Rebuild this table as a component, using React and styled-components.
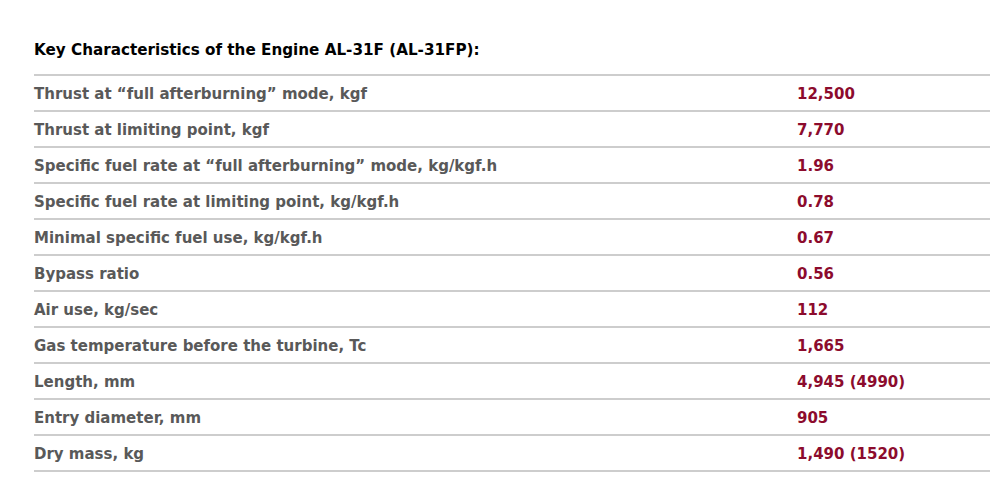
import styled, { createGlobalStyle } from 'styled-components';

const GlobalStyle = createGlobalStyle`
  body {
    margin: 0;
    background: #fff;
    font-family: "DejaVu Sans", Verdana, sans-serif;
  }
`;

const Wrap = styled.div`
  padding: 40px 10px 0 34px;
`;

const Title = styled.h3`
  margin: 0 0 13px;
  font-size: 15.2px;
  font-weight: bold;
  color: #000;
  line-height: 21px;
`;

const Table = styled.div`
  width: 956px;
  border-top: 2px solid #cdcdcd;
`;

const Row = styled.div`
  display: grid;
  grid-template-columns: 763px 1fr;
  height: 34px;
  padding-top: 1px;
  box-sizing: border-box;
  align-items: center;
  border-bottom: 2px solid #cdcdcd;
  font-size: 15px;
  font-weight: bold;
  height: 36px;
`;

const Label = styled.div`
  color: #595959;
`;

const Value = styled.div`
  color: #8c0b2d;
`;

const rows = [
  ['Thrust at \u201cfull afterburning\u201d mode, kgf', '12,500'],
  ['Thrust at limiting point, kgf', '7,770'],
  ['Specific fuel rate at \u201cfull afterburning\u201d mode, kg/kgf.h', '1.96'],
  ['Specific fuel rate at limiting point, kg/kgf.h', '0.78'],
  ['Minimal specific fuel use, kg/kgf.h', '0.67'],
  ['Bypass ratio', '0.56'],
  ['Air use, kg/sec', '112'],
  ['Gas temperature before the turbine, Tc', '1,665'],
  ['Length, mm', '4,945 (4990)'],
  ['Entry diameter, mm', '905'],
  ['Dry mass, kg', '1,490 (1520)'],
];

export default function App() {
  return (
    <>
      <GlobalStyle />
      <Wrap>
        <Title>Key Characteristics of the Engine AL-31F (AL-31FP):</Title>
        <Table>
          {rows.map(([label, value]) => (
            <Row key={label}>
              <Label>{label}</Label>
              <Value>{value}</Value>
            </Row>
          ))}
        </Table>
      </Wrap>
    </>
  );
}
